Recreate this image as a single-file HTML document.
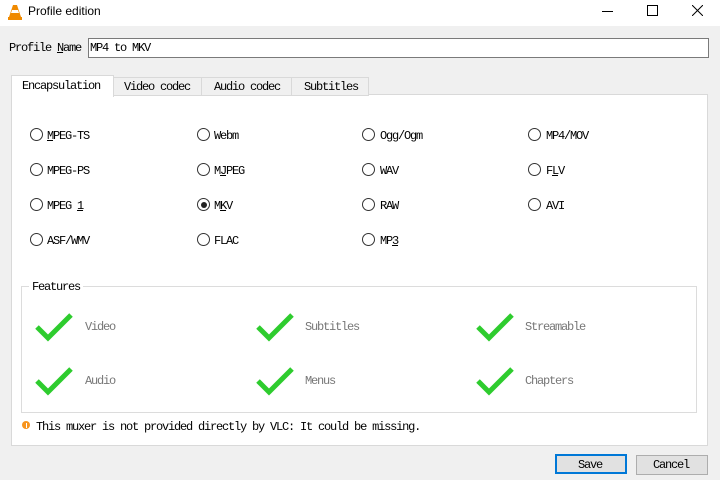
<!DOCTYPE html>
<html><head><style>
body{margin:0;width:720px;height:480px;background:#f0f0f0;position:relative;overflow:hidden;font-family:"Liberation Mono",monospace;font-size:12px;letter-spacing:-1.2px;color:#000}
.a{position:absolute;white-space:nowrap}
.r{position:absolute;width:11px;height:11px;border:1px solid #333;border-radius:50%;background:#fff}
.r.s::after{content:"";position:absolute;left:2.5px;top:2.5px;width:6px;height:6px;border-radius:50%;background:#222}
.ck{position:absolute}
.g{color:#777}
</style></head><body>
<div class="a" style="left:0;top:0;width:720px;height:26px;background:#fff"></div>
<svg class="a" style="left:8px;top:4px" width="14" height="16" viewBox="0 0 14 16"><path d="M5 1h4l4 12H1z" fill="#f08a00"/><path d="M4 6h6l1 3H3z" fill="#fff"/><rect x="0" y="13" width="14" height="3" fill="#f08a00"/></svg>
<div class="a" style="left:28px;top:4px;font-family:'Liberation Sans',sans-serif;font-size:12px;letter-spacing:0">Profile edition</div>
<div class="a" style="left:602px;top:11px;width:11px;height:1px;background:#000"></div>
<div class="a" style="left:647px;top:5px;width:9px;height:9px;border:1px solid #000"></div>
<svg class="a" style="left:692px;top:5px" width="11" height="11"><path d="M0 0L11 11M11 0L0 11" stroke="#000" stroke-width="1"/></svg>
<div class="a" style="left:9px;top:41px">Profile <u>N</u>ame</div>
<div class="a" style="left:88px;top:38px;width:619px;height:18px;background:#fff;border:1px solid #7a7a7a"></div>
<div class="a" style="left:90px;top:41px">MP4 to MKV</div>
<div class="a" style="left:11px;top:94px;width:695px;height:350px;background:#fff;border:1px solid #d9d9d9"></div>
<div class="a" style="left:113px;top:77px;width:87px;height:17px;border:1px solid #d9d9d9;background:#f0f0f0"></div>
<div class="a" style="left:201px;top:77px;width:89px;height:17px;border:1px solid #d9d9d9;background:#f0f0f0"></div>
<div class="a" style="left:291px;top:77px;width:76px;height:17px;border:1px solid #d9d9d9;background:#f0f0f0"></div>
<div class="a" style="left:11px;top:75px;width:101px;height:21px;border:1px solid #d9d9d9;border-bottom:none;background:#fff"></div>
<div class="a" style="left:22px;top:79px">Encapsulation</div>
<div class="a" style="left:124px;top:80px">Video codec</div>
<div class="a" style="left:214px;top:80px">Audio codec</div>
<div class="a" style="left:304px;top:80px">Subtitles</div>

<div class="r" style="left:30px;top:128px"></div><div class="a" style="left:47px;top:129px"><u>M</u>PEG-TS</div>
<div class="r" style="left:197px;top:128px"></div><div class="a" style="left:214px;top:129px">Webm</div>
<div class="r" style="left:362px;top:128px"></div><div class="a" style="left:380px;top:129px">Ogg/Ogm</div>
<div class="r" style="left:528px;top:128px"></div><div class="a" style="left:546px;top:129px">MP4/MOV</div>

<div class="r" style="left:30px;top:163px"></div><div class="a" style="left:47px;top:164px">MPEG-PS</div>
<div class="r" style="left:197px;top:163px"></div><div class="a" style="left:214px;top:164px">M<u>J</u>PEG</div>
<div class="r" style="left:362px;top:163px"></div><div class="a" style="left:380px;top:164px">WAV</div>
<div class="r" style="left:528px;top:163px"></div><div class="a" style="left:546px;top:164px">F<u>L</u>V</div>

<div class="r" style="left:30px;top:198px"></div><div class="a" style="left:47px;top:199px">MPEG <u>1</u></div>
<div class="r s" style="left:197px;top:198px"></div><div class="a" style="left:214px;top:199px">M<u>K</u>V</div>
<div class="r" style="left:362px;top:198px"></div><div class="a" style="left:380px;top:199px">RAW</div>
<div class="r" style="left:528px;top:198px"></div><div class="a" style="left:546px;top:199px">AVI</div>

<div class="r" style="left:30px;top:233px"></div><div class="a" style="left:47px;top:234px">ASF/WMV</div>
<div class="r" style="left:197px;top:233px"></div><div class="a" style="left:214px;top:234px">FLAC</div>
<div class="r" style="left:362px;top:233px"></div><div class="a" style="left:380px;top:234px">MP<u>3</u></div>

<div class="a" style="left:21px;top:286px;width:674px;height:125px;border:1px solid #dcdcdc"></div>
<div class="a" style="left:29px;top:280px;background:#fff;padding:0 3px">Features</div>

<svg class="ck" style="left:34px;top:311px" width="42" height="32"><path d="M3 16L14 27L37 4" fill="none" stroke="#2ecc2e" stroke-width="5"/></svg>
<svg class="ck" style="left:255px;top:311px" width="42" height="32"><path d="M3 16L14 27L37 4" fill="none" stroke="#2ecc2e" stroke-width="5"/></svg>
<svg class="ck" style="left:475px;top:311px" width="42" height="32"><path d="M3 16L14 27L37 4" fill="none" stroke="#2ecc2e" stroke-width="5"/></svg>
<svg class="ck" style="left:34px;top:365px" width="42" height="32"><path d="M3 16L14 27L37 4" fill="none" stroke="#2ecc2e" stroke-width="5"/></svg>
<svg class="ck" style="left:255px;top:365px" width="42" height="32"><path d="M3 16L14 27L37 4" fill="none" stroke="#2ecc2e" stroke-width="5"/></svg>
<svg class="ck" style="left:475px;top:365px" width="42" height="32"><path d="M3 16L14 27L37 4" fill="none" stroke="#2ecc2e" stroke-width="5"/></svg>
<div class="a g" style="left:85px;top:320px">Video</div>
<div class="a g" style="left:305px;top:320px">Subtitles</div>
<div class="a g" style="left:525px;top:320px">Streamable</div>
<div class="a g" style="left:85px;top:374px">Audio</div>
<div class="a g" style="left:305px;top:374px">Menus</div>
<div class="a g" style="left:525px;top:374px">Chapters</div>

<div class="a" style="left:22px;top:421px;width:8px;height:8px;border-radius:50%;background:#f7941d"></div>
<div class="a" style="left:25.5px;top:422.5px;width:1px;height:5px;background:#fff"></div>
<div class="a" style="left:36px;top:420px">This muxer is not provided directly by VLC: It could be missing.</div>

<div class="a" style="left:555px;top:454px;width:68px;height:16px;border:2px solid #0078d7;background:#e1e1e1"></div>
<div class="a" style="left:578px;top:458px">Save</div>
<div class="a" style="left:636px;top:455px;width:70px;height:18px;border:1px solid #adadad;background:#e1e1e1"></div>
<div class="a" style="left:653px;top:458px">Cancel</div>
</body></html>
